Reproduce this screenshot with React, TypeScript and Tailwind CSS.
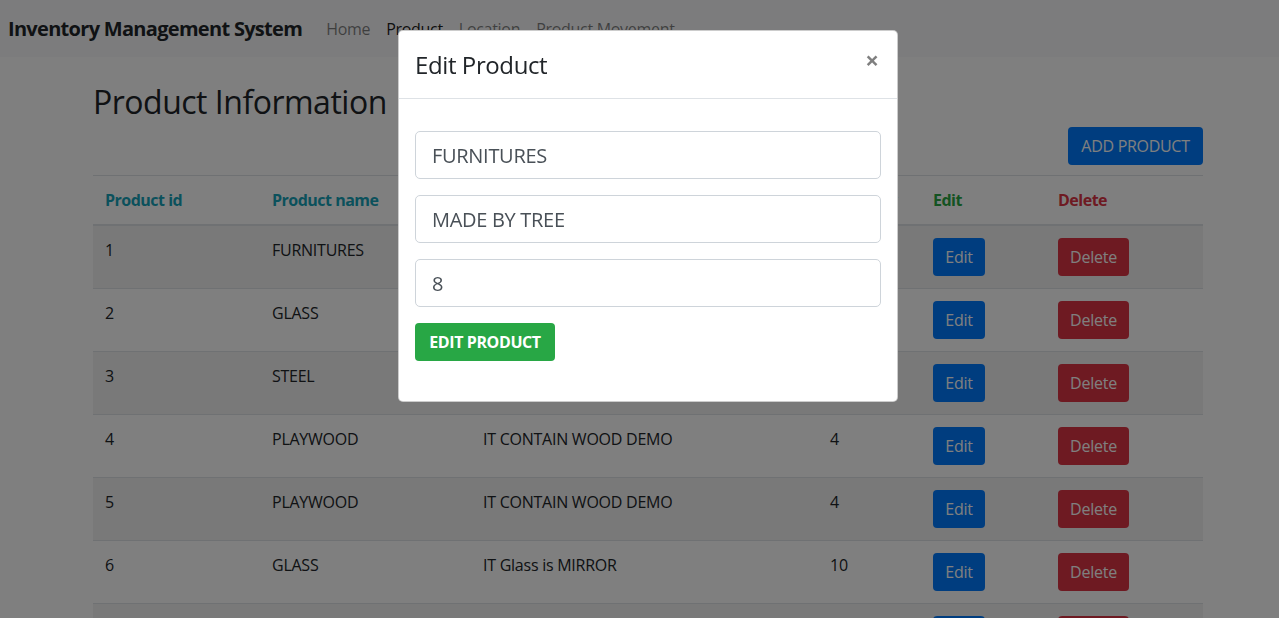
import React from 'react';

const rows = [
  { id: 1, name: 'FURNITURES', desc: 'MADE BY TREE', qty: 8 },
  { id: 2, name: 'GLASS', desc: 'IT Glass is MIRROR', qty: 10 },
  { id: 3, name: 'STEEL', desc: 'IT CONTAIN IRON', qty: 6 },
  { id: 4, name: 'PLAYWOOD', desc: 'IT CONTAIN WOOD DEMO', qty: 4 },
  { id: 5, name: 'PLAYWOOD', desc: 'IT CONTAIN WOOD DEMO', qty: 4 },
  { id: 6, name: 'GLASS', desc: 'IT Glass is MIRROR', qty: 10 },
  { id: 7, name: 'STEEL', desc: 'IT CONTAIN IRON', qty: 12 },
];

const font = { fontFamily: '"Open Sans", "Noto Sans", sans-serif' };

const Navbar: React.FC = () => (
  <nav className="flex h-[57px] items-center bg-[#f8f9fa] px-2">
    <span className="mr-4 text-[20px] font-bold tracking-[-0.7px] text-[#212529]">Inventory Management System</span>
    <ul className="flex text-[16px] tracking-[-0.3px]">
      <li className="px-2 text-black/50">Home</li>
      <li className="px-2 text-black/90">Product</li>
      <li className="px-2 text-black/50">Location</li>
      <li className="px-2 text-black/50">Product Movement</li>
    </ul>
  </nav>
);

const ProductTable: React.FC = () => (
  <table className="w-full table-fixed border-collapse text-[16px] tracking-[-0.25px] text-[#212529]">
    <colgroup>
      <col className="w-[167px]" />
      <col className="w-[211px]" />
      <col className="w-[347px]" />
      <col className="w-[103px]" />
      <col className="w-[125px]" />
      <col className="w-[157px]" />
    </colgroup>
    <thead>
      <tr className="border-t border-[#dee2e6] font-bold">
        <th className="border-b-2 border-[#dee2e6] p-3 text-left tracking-[-0.5px] text-[#17a2b8]">Product id</th>
        <th className="border-b-2 border-[#dee2e6] p-3 text-left tracking-[-0.5px] text-[#17a2b8]">Product name</th>
        <th className="border-b-2 border-[#dee2e6] p-3 text-left tracking-[-0.5px] text-[#17a2b8]">Product description</th>
        <th className="border-b-2 border-[#dee2e6] p-3 text-left tracking-[-0.5px] text-[#17a2b8]">Quantity</th>
        <th className="border-b-2 border-[#dee2e6] p-3 text-left tracking-[-0.5px] text-[#28a745]">Edit</th>
        <th className="border-b-2 border-[#dee2e6] p-3 text-left tracking-[-0.5px] text-[#dc3545]">Delete</th>
      </tr>
    </thead>
    <tbody>
      {rows.map((r, i) => (
        <tr key={r.id} className={`border-t border-[#dee2e6] ${i % 2 === 0 ? 'bg-black/5' : ''}`}>
          <td className="p-3 align-top">{r.id}</td>
          <td className="p-3 align-top">{r.name}</td>
          <td className="p-3 align-top">{r.desc}</td>
          <td className="p-3 align-top">{r.qty}</td>
          <td className="p-3 align-top">
            <button className="h-[38px] w-[52px] rounded bg-[#007bff] text-white">Edit</button>
          </td>
          <td className="p-3 align-top">
            <button className="h-[38px] w-[71px] rounded bg-[#dc3545] text-white">Delete</button>
          </td>
        </tr>
      ))}
    </tbody>
  </table>
);

const inputCls = 'h-12 w-full rounded-[5px] border border-[#ced4da] px-4 text-[20px] tracking-[-0.3px] text-[#495057]';

const EditModal: React.FC = () => (
  <div className="fixed inset-0 flex justify-center pl-[17px]">
    <div className="mt-[30px] h-fit w-[500px] rounded-[5px] border border-black/20 bg-white">
      <div className="flex h-[68px] items-start justify-between border-b border-[#dee2e6] px-4 pt-4">
        <h4 className="text-[24px] leading-[36px] tracking-[-0.4px] text-[#212529]">Edit Product</h4>
        <span className="-mt-[2px] mr-[2px] text-[24px] leading-[30px] font-bold text-black/50">×</span>
      </div>
      <div className="px-4 pt-8 pb-10">
        <div className="flex flex-col gap-4">
          <input readOnly value="FURNITURES" className={inputCls} />
          <input readOnly value="MADE BY TREE" className={inputCls} />
          <input readOnly value="8" className={inputCls} />
        </div>
        <button className="mt-4 h-[38px] w-[140px] rounded bg-[#28a745] text-[16px] font-bold tracking-[-0.4px] text-white">
          EDIT PRODUCT
        </button>
      </div>
    </div>
  </div>
);

export default function App() {
  return (
    <div className="relative h-[618px] overflow-hidden bg-white" style={font}>
      <Navbar />
      <div className="pl-[17px]">
        <div className="mx-auto w-[1110px]">
          <h2 className="mt-[26px] text-[32px] leading-[38px] font-medium tracking-[-0.5px] text-[#212529]">
            Product Information
          </h2>
          <div className="mt-[6px] flex justify-end">
            <button className="h-[38px] w-[135px] rounded bg-[#007bff] text-[16px] tracking-[-0.3px] text-white">
              ADD PRODUCT
            </button>
          </div>
          <div className="mt-[10px]">
            <ProductTable />
          </div>
        </div>
      </div>
      <div className="fixed inset-0 bg-black/50" />
      <EditModal />
    </div>
  );
}
